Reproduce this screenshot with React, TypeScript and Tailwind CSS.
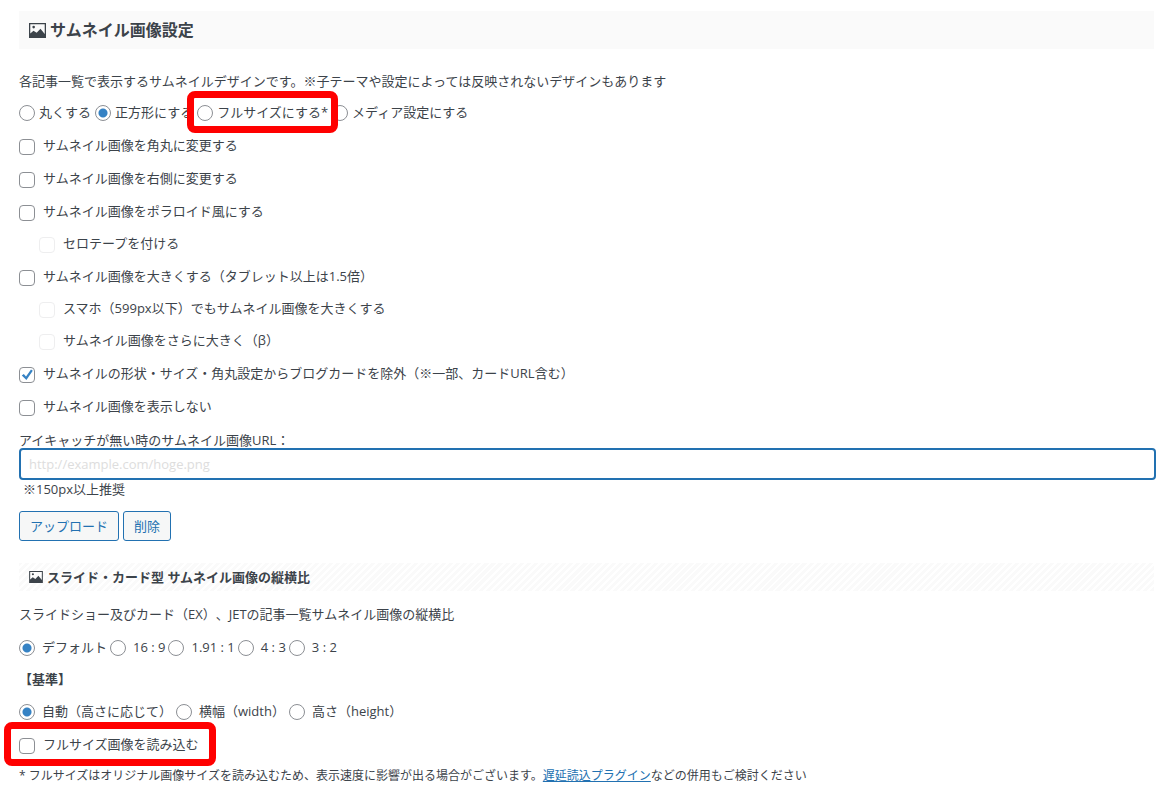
import type { ReactNode } from "react";

function PictureIcon({ className }: { className: string }) {
  return (
    <svg viewBox="0 0 16 14" className={className} aria-hidden="true">
      <path
        fill="currentColor"
        fillRule="evenodd"
        d="M0 0H16V14H0ZM1.2 1.2V9.8L4.2 7.2L7.2 9.2L10.8 5.4L14.8 10.4V1.2Z"
      />
      <circle cx="4.4" cy="3.8" r="1.2" fill="currentColor" />
    </svg>
  );
}

const radioClass =
  "mt-[3px] size-4 shrink-0 appearance-none rounded-full border border-[#8c8f94] bg-white checked:bg-[radial-gradient(circle,#3582c4_0_4px,transparent_5px)]";

function Radio({ name, label, defaultChecked, tight, children }: {
  name: string;
  label: string;
  defaultChecked?: boolean;
  tight?: boolean;
  children?: ReactNode;
}) {
  return (
    <label className={`relative flex items-start whitespace-nowrap ${tight ? "gap-1" : "gap-[7px]"}`}>
      <input type="radio" name={name} defaultChecked={defaultChecked} className={radioClass} />
      <span>{label}</span>
      {children}
    </label>
  );
}

function Check({ label, defaultChecked, nested, children }: {
  label: string;
  defaultChecked?: boolean;
  nested?: boolean;
  children?: ReactNode;
}) {
  return (
    <div className={`flex items-center ${nested ? "h-8 pl-5" : "h-[33px]"}`}>
      <label className="relative flex items-start gap-2">
        <span className="relative mt-1 size-4 shrink-0">
          <input
            type="checkbox"
            defaultChecked={defaultChecked}
            disabled={nested}
            className="peer block size-4 appearance-none rounded border border-[#8c8f94] bg-white disabled:border-[#eeeeef]"
          />
          <svg viewBox="0 0 16 16" className="pointer-events-none absolute inset-0 hidden size-4 peer-checked:block" aria-hidden="true">
            <path d="M2.8 8.4L4.8 6.9L7 9.4L12 2.6L13.8 3.8L7.4 12.9Z" fill="#3582c4" />
          </svg>
        </span>
        <span>{label}</span>
        {children}
      </label>
    </div>
  );
}

function Highlight({ className }: { className: string }) {
  return <span className={`pointer-events-none absolute z-10 border-[7px] border-[#ff0000] ${className}`} />;
}

const buttonClass = "h-[30px] rounded-[3px] border border-[#2271b1] bg-[#f6f7f7] px-2.5 text-[13px] text-[#2271b1]";

export default function App() {
  return (
    <main className="min-h-screen bg-white pt-[11px] pr-[13px] pl-[19px] font-['Open_Sans','Noto_Sans_CJK_JP',sans-serif] text-[13px] leading-5 text-[#3c434a] [text-spacing-trim:space-all]">
      <h2 className="mr-0.5 flex h-[38px] items-center gap-1 bg-[#fafafa] px-2.5 text-base font-bold">
        <PictureIcon className="h-[15px] w-[17px]" />
        サムネイル画像設定
      </h2>
      <p className="mt-[22px]">
        各記事一覧で表示するサムネイルデザインです。※子テーマや設定によっては反映されないデザインもあります
      </p>
      <div className="mt-[5px] flex h-8 items-center gap-1">
        <Radio name="shape" label="丸くする" tight />
        <Radio name="shape" label="正方形にする" tight defaultChecked />
        <Radio name="shape" label="フルサイズにする*" tight>
          <Highlight className="-inset-x-2.5 -inset-y-[11px] rounded-lg" />
        </Radio>
        <Radio name="shape" label="メディア設定にする" tight />
      </div>
      <Check label="サムネイル画像を角丸に変更する" />
      <Check label="サムネイル画像を右側に変更する" />
      <Check label="サムネイル画像をポラロイド風にする" />
      <Check label="セロテープを付ける" nested />
      <Check label="サムネイル画像を大きくする（タブレット以上は1.5倍）" />
      <Check label="スマホ（599px以下）でもサムネイル画像を大きくする" nested />
      <Check label="サムネイル画像をさらに大きく（β）" nested />
      <Check label="サムネイルの形状・サイズ・角丸設定からブログカードを除外（※一部、カードURL含む）" defaultChecked />
      <Check label="サムネイル画像を表示しない" />
      <label htmlFor="thumb-url" className="mt-2 block h-[18px]">
        アイキャッチが無い時のサムネイル画像URL：
      </label>
      <input
        id="thumb-url"
        type="text"
        placeholder="http://example.com/hoge.png"
        className="block h-8 w-full rounded border-2 border-[#2271b1] bg-white px-2 text-[13px] outline-none placeholder:text-[#dddddd]"
      />
      <p className="pl-1 leading-[18px]">※150px以上推奨</p>
      <div className="mt-[13px] flex gap-1">
        <button type="button" className={buttonClass}>アップロード</button>
        <button type="button" className={buttonClass}>削除</button>
      </div>
      <h3 className="mt-[22px] mr-0.5 flex h-7 items-center gap-1 bg-[repeating-linear-gradient(-45deg,#fafafa_0_3px,#ffffff_3px_5px)] px-2.5 text-[13px] font-bold">
        <PictureIcon className="h-3 w-3.5" />
        スライド・カード型 サムネイル画像の縦横比
      </h3>
      <p className="mt-[13px]">スライドショー及びカード（EX）、JETの記事一覧サムネイル画像の縦横比</p>
      <div className="mt-1.5 flex h-[33px] items-center gap-[3px]">
        <Radio name="ratio" label="デフォルト" defaultChecked />
        <Radio name="ratio" label="16 : 9" />
        <Radio name="ratio" label="1.91 : 1" />
        <Radio name="ratio" label="4 : 3" />
        <Radio name="ratio" label="3 : 2" />
      </div>
      <p className="flex h-8 items-center font-bold">【基準】</p>
      <div className="flex h-8 items-center gap-1">
        <Radio name="basis" label="自動（高さに応じて）" defaultChecked />
        <Radio name="basis" label="横幅（width）" />
        <Radio name="basis" label="高さ（height）" />
      </div>
      <Check label="フルサイズ画像を読み込む">
        <Highlight className="-right-[17px] -left-[15px] -inset-y-3 rounded-lg" />
      </Check>
      <p className="mt-1.5 text-xs leading-5">
        * フルサイズはオリジナル画像サイズを読み込むため、表示速度に影響が出る場合がございます。
        <a href="#plugin" className="text-[#2271b1] underline">遅延読込プラグイン</a>
        などの併用もご検討ください
      </p>
    </main>
  );
}
